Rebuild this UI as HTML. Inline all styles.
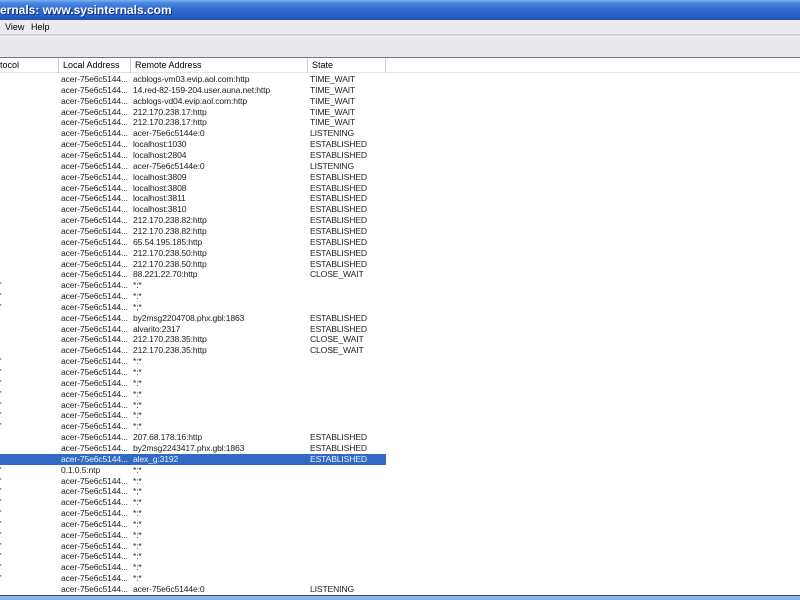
<!DOCTYPE html>
<html><head><style>
*{margin:0;padding:0;box-sizing:border-box}
body{width:800px;height:600px;overflow:hidden;background:#fff;font-family:"Liberation Sans",Arial,sans-serif;position:relative}
#title{position:absolute;left:0;top:0;width:800px;height:20px;background:linear-gradient(#7fb0f0 0,#4a86e0 3px,#2f68cf 10px,#2a5fc4 16px,#2250b0 20px);color:#fff;font-weight:bold;font-size:12px;line-height:20px;padding-left:0;text-shadow:1px 1px 0 #103080}
#menu{position:absolute;left:0;top:20px;width:800px;height:16px;background:#ebeaee;font-size:9px;line-height:15px;border-bottom:2px solid #d2d1d6}
#tool{position:absolute;left:0;top:36px;width:800px;height:22px;background:#e9e8ec;border-top:1px solid #f8f8fa;border-bottom:1px solid #777}
#hdr{position:absolute;left:0;top:58px;width:800px;height:15px;background:#fff;border-bottom:1px solid #e4e4e4;font-size:9px;line-height:15px}
.h{position:absolute;top:0;height:15px;border-left:1px solid #ccc;padding-left:4px}
.r{position:absolute;left:0;width:386px;height:11px;font-size:8.6px;line-height:11px;color:#222;white-space:nowrap;letter-spacing:-0.15px}
.r span{position:absolute;top:0}
.a{left:61px}.b{left:133px}.c{left:310px}.p{left:0}
.sel{background:#316ac5;color:#e8eefa}
#bot{position:absolute;left:0;top:595px;width:800px;height:5px;background:#8fb2e8;border-top:1px solid #2b4a80}
</style></head><body>
<div id="title">ernals: www.sysinternals.com</div>
<div id="menu"><span style="position:absolute;left:5px">View</span><span style="position:absolute;left:31px">Help</span></div>
<div id="tool"></div>
<div id="hdr"><span style="position:absolute;left:0">tocol</span><div class="h" style="left:58px">Local Address</div><div class="h" style="left:130px">Remote Address</div><div class="h" style="left:307px">State</div><div class="h" style="left:385px;width:1px"></div></div>
<div id="rows">
<div class="r" style="top:74px"><span class="a">acer-75e6c5144...</span><span class="b">acblogs-vm03.evip.aol.com:http</span><span class="c">TIME_WAIT</span></div>
<div class="r" style="top:85px"><span class="a">acer-75e6c5144...</span><span class="b">14.red-82-159-204.user.auna.net:http</span><span class="c">TIME_WAIT</span></div>
<div class="r" style="top:96px"><span class="a">acer-75e6c5144...</span><span class="b">acblogs-vd04.evip.aol.com:http</span><span class="c">TIME_WAIT</span></div>
<div class="r" style="top:106.5px"><span class="a">acer-75e6c5144...</span><span class="b">212.170.238.17:http</span><span class="c">TIME_WAIT</span></div>
<div class="r" style="top:117.4px"><span class="a">acer-75e6c5144...</span><span class="b">212.170.238.17:http</span><span class="c">TIME_WAIT</span></div>
<div class="r" style="top:128.3px"><span class="a">acer-75e6c5144...</span><span class="b">acer-75e6c5144e:0</span><span class="c">LISTENING</span></div>
<div class="r" style="top:139.1px"><span class="a">acer-75e6c5144...</span><span class="b">localhost:1030</span><span class="c">ESTABLISHED</span></div>
<div class="r" style="top:150px"><span class="a">acer-75e6c5144...</span><span class="b">localhost:2804</span><span class="c">ESTABLISHED</span></div>
<div class="r" style="top:160.8px"><span class="a">acer-75e6c5144...</span><span class="b">acer-75e6c5144e:0</span><span class="c">LISTENING</span></div>
<div class="r" style="top:171.7px"><span class="a">acer-75e6c5144...</span><span class="b">localhost:3809</span><span class="c">ESTABLISHED</span></div>
<div class="r" style="top:182.5px"><span class="a">acer-75e6c5144...</span><span class="b">localhost:3808</span><span class="c">ESTABLISHED</span></div>
<div class="r" style="top:193.4px"><span class="a">acer-75e6c5144...</span><span class="b">localhost:3811</span><span class="c">ESTABLISHED</span></div>
<div class="r" style="top:204.2px"><span class="a">acer-75e6c5144...</span><span class="b">localhost:3810</span><span class="c">ESTABLISHED</span></div>
<div class="r" style="top:215.1px"><span class="a">acer-75e6c5144...</span><span class="b">212.170.238.82:http</span><span class="c">ESTABLISHED</span></div>
<div class="r" style="top:225.9px"><span class="a">acer-75e6c5144...</span><span class="b">212.170.238.82:http</span><span class="c">ESTABLISHED</span></div>
<div class="r" style="top:236.8px"><span class="a">acer-75e6c5144...</span><span class="b">65.54.195.185:http</span><span class="c">ESTABLISHED</span></div>
<div class="r" style="top:247.6px"><span class="a">acer-75e6c5144...</span><span class="b">212.170.238.50:http</span><span class="c">ESTABLISHED</span></div>
<div class="r" style="top:258.5px"><span class="a">acer-75e6c5144...</span><span class="b">212.170.238.50:http</span><span class="c">ESTABLISHED</span></div>
<div class="r" style="top:269.3px"><span class="a">acer-75e6c5144...</span><span class="b">88.221.22.70:http</span><span class="c">CLOSE_WAIT</span></div>
<div class="r" style="top:280.2px"><span class="p">'</span><span class="a">acer-75e6c5144...</span><span class="b">*:*</span></div>
<div class="r" style="top:291px"><span class="p">'</span><span class="a">acer-75e6c5144...</span><span class="b">*:*</span></div>
<div class="r" style="top:301.9px"><span class="p">'</span><span class="a">acer-75e6c5144...</span><span class="b">*:*</span></div>
<div class="r" style="top:312.7px"><span class="a">acer-75e6c5144...</span><span class="b">by2msg2204708.phx.gbl:1863</span><span class="c">ESTABLISHED</span></div>
<div class="r" style="top:323.6px"><span class="a">acer-75e6c5144...</span><span class="b">alvarito:2317</span><span class="c">ESTABLISHED</span></div>
<div class="r" style="top:334.4px"><span class="a">acer-75e6c5144...</span><span class="b">212.170.238.35:http</span><span class="c">CLOSE_WAIT</span></div>
<div class="r" style="top:345.3px"><span class="a">acer-75e6c5144...</span><span class="b">212.170.238.35:http</span><span class="c">CLOSE_WAIT</span></div>
<div class="r" style="top:356.1px"><span class="p">'</span><span class="a">acer-75e6c5144...</span><span class="b">*:*</span></div>
<div class="r" style="top:367px"><span class="p">'</span><span class="a">acer-75e6c5144...</span><span class="b">*:*</span></div>
<div class="r" style="top:377.8px"><span class="p">'</span><span class="a">acer-75e6c5144...</span><span class="b">*:*</span></div>
<div class="r" style="top:388.7px"><span class="p">'</span><span class="a">acer-75e6c5144...</span><span class="b">*:*</span></div>
<div class="r" style="top:399.5px"><span class="p">'</span><span class="a">acer-75e6c5144...</span><span class="b">*:*</span></div>
<div class="r" style="top:410.4px"><span class="p">'</span><span class="a">acer-75e6c5144...</span><span class="b">*:*</span></div>
<div class="r" style="top:421.2px"><span class="p">'</span><span class="a">acer-75e6c5144...</span><span class="b">*:*</span></div>
<div class="r" style="top:432.1px"><span class="a">acer-75e6c5144...</span><span class="b">207.68.178.16:http</span><span class="c">ESTABLISHED</span></div>
<div class="r" style="top:442.9px"><span class="a">acer-75e6c5144...</span><span class="b">by2msg2243417.phx.gbl:1863</span><span class="c">ESTABLISHED</span></div>
<div class="r sel" style="top:453.8px"><span class="a">acer-75e6c5144...</span><span class="b">alex_g:3192</span><span class="c">ESTABLISHED</span></div>
<div class="r" style="top:464.6px"><span class="p">'</span><span class="a">0.1.0.5:ntp</span><span class="b">*:*</span></div>
<div class="r" style="top:475.5px"><span class="p">'</span><span class="a">acer-75e6c5144...</span><span class="b">*:*</span></div>
<div class="r" style="top:486.3px"><span class="p">'</span><span class="a">acer-75e6c5144...</span><span class="b">*:*</span></div>
<div class="r" style="top:497.2px"><span class="p">'</span><span class="a">acer-75e6c5144...</span><span class="b">*:*</span></div>
<div class="r" style="top:508px"><span class="p">'</span><span class="a">acer-75e6c5144...</span><span class="b">*:*</span></div>
<div class="r" style="top:518.9px"><span class="p">'</span><span class="a">acer-75e6c5144...</span><span class="b">*:*</span></div>
<div class="r" style="top:529.7px"><span class="p">'</span><span class="a">acer-75e6c5144...</span><span class="b">*:*</span></div>
<div class="r" style="top:540.6px"><span class="p">'</span><span class="a">acer-75e6c5144...</span><span class="b">*:*</span></div>
<div class="r" style="top:551.4px"><span class="p">'</span><span class="a">acer-75e6c5144...</span><span class="b">*:*</span></div>
<div class="r" style="top:562.3px"><span class="p">'</span><span class="a">acer-75e6c5144...</span><span class="b">*:*</span></div>
<div class="r" style="top:573.1px"><span class="p">'</span><span class="a">acer-75e6c5144...</span><span class="b">*:*</span></div>
<div class="r" style="top:584px"><span class="a">acer-75e6c5144...</span><span class="b">acer-75e6c5144e:0</span><span class="c">LISTENING</span></div>
</div>
<div id="bot"></div>
</body></html>
